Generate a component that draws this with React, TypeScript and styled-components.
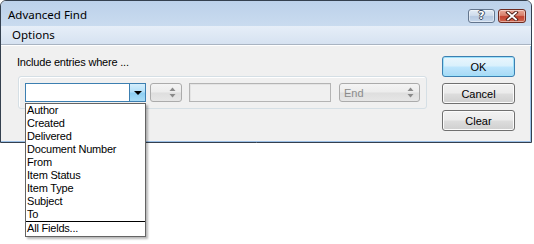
import React from "react";
import styled, { createGlobalStyle } from "styled-components";

const Global = createGlobalStyle`
  html, body { margin: 0; padding: 0; background: #ffffff; }
  body { font-family: "Liberation Sans", Arial, sans-serif; font-size: 11px; color: #000; }
  * { box-sizing: border-box; }
`;

const Page = styled.div`
  width: 534px;
  height: 244px;
  background: #ffffff;
  position: relative;
`;

const Window = styled.div`
  position: relative;
  width: 532px;
  height: 143px;
  display: flex;
  flex-direction: column;
  border: 1px solid #34404f;
  border-radius: 6px 6px 0 0;
  background: #f0f0f0;
  box-shadow: inset -1px -1px 0 #9cc0e6;
`;

const TitleBar = styled.div`
  height: 25px;
  display: flex;
  align-items: flex-start;
  padding: 0 5px 0 7px;
  border-radius: 5px 5px 0 0;
  background: linear-gradient(#bcd1ea, #c9dbef);
`;

const TitleText = styled.div`
  flex: 1;
  margin-top: 6px;
  font-family: "Noto Sans", "Open Sans", sans-serif;
  font-size: 11.5px;
  line-height: 16px;
  color: #000;
`;

const CaptionButtons = styled.div`
  display: flex;
  gap: 3px;
  margin-top: 8px;
`;

const CaptionButton = styled.div<{ $close?: boolean }>`
  width: ${(p) => (p.$close ? 28 : 27)}px;
  height: 14px;
  border-radius: 3px;
  border: 1px solid ${(p) => (p.$close ? "#6e2b21" : "#63758d")};
  background: ${(p) =>
    p.$close
      ? "linear-gradient(#e9a99a 0%, #d8806c 45%, #c2412f 55%, #d0674f 100%)"
      : "linear-gradient(#e3ecf6 0%, #cfdcec 45%, #b6c9e1 55%, #c7d8ec 100%)"};
  box-shadow: inset 0 0 0 1px rgba(255, 255, 255, 0.45);
  display: flex;
  align-items: center;
  justify-content: center;
`;

const HelpGlyph = styled.span`
  font-family: "DejaVu Sans", sans-serif;
  font-weight: bold;
  font-size: 11px;
  line-height: 12px;
  color: #ffffff;
  text-shadow: 1px 0 0 #3a4b62, -1px 0 0 #3a4b62, 0 1px 0 #3a4b62, 0 -1px 0 #3a4b62;
`;

const MenuBar = styled.div`
  height: 19px;
  display: flex;
  align-items: center;
  padding-left: 11px;
  background: linear-gradient(#e6eef8, #d6e2f1);
  border-bottom: 1px solid #a9b4c2;
  box-shadow: 0 1px 0 #ffffff;
`;

const MenuItem = styled.span`
  font-family: "Noto Sans", "Open Sans", sans-serif;
  font-size: 11.5px;
  line-height: 16px;
  color: #000;
`;

const Content = styled.div`
  flex: 1;
  display: flex;
  padding: 11px 0 0 16px;
`;

const LeftColumn = styled.div`
  display: flex;
  flex-direction: column;
`;

const Label = styled.div`
  font-size: 11px;
  line-height: 13px;
  height: 13px;
  letter-spacing: -0.2px;
`;

const GroupBox = styled.div`
  margin: 7px 0 0 1px;
  width: 409px;
  height: 33px;
  border: 1px solid #d5dfe5;
  border-radius: 3px;
  box-shadow: inset 1px 1px 0 #ffffff;
  padding: 6px;
  display: flex;
  align-items: flex-start;
`;

const ComboWrap = styled.div`
  position: relative;
  width: 121px;
  height: 19px;
`;

const ActiveCombo = styled.div`
  width: 121px;
  height: 19px;
  display: flex;
  background: #ffffff;
  border: 1px solid #3c7fb1;
`;

const ComboField = styled.div`
  flex: 1;
`;

const DropButton = styled.div`
  width: 16px;
  border-left: 1px solid #3c7fb1;
  background: linear-gradient(#d5eefc 0%, #b3e0f9 45%, #8fd0f3 55%, #a9dcf6 100%);
  display: flex;
  align-items: center;
  justify-content: center;
`;

const DownArrow = styled.div`
  width: 0;
  height: 0;
  border-left: 4px solid transparent;
  border-right: 4px solid transparent;
  border-top: 4px solid #000;
  margin-top: 1px;
`;

const DisabledCombo = styled.div<{ $w: number; $ml: number }>`
  width: ${(p) => p.$w}px;
  height: 19px;
  margin-left: ${(p) => p.$ml}px;
  border: 1px solid #ababab;
  border-radius: 3px;
  background: linear-gradient(#f4f4f4 0%, #ececec 48%, #dedede 52%, #e6e6e6 100%);
  display: flex;
  align-items: center;
  padding: 0 5px 0 4px;
  color: #8b8b8b;
  font-size: 11px;
`;

const ComboLabel = styled.span`
  flex: 1;
`;

const DisabledText = styled.div`
  width: 142px;
  height: 19px;
  margin-left: 7px;
  border: 1px solid #b4b4b4;
  box-shadow: inset 1px 1px 0 #e4e4e4;
  background: #f0f0f0;
`;

const SpinArrows = () => (
  <svg width="7" height="11" viewBox="0 0 7 11">
    <path d="M3.5 0.5 L6.5 4 L0.5 4 Z" fill="#8a8a8a" />
    <path d="M3.5 10.5 L6.5 7 L0.5 7 Z" fill="#8a8a8a" />
  </svg>
);

const ListBox = styled.ul`
  position: absolute;
  left: 0;
  top: 20px;
  width: 121px;
  margin: 0;
  padding: 0 0 1px;
  list-style: none;
  background: #ffffff;
  border: 1px solid #646464;
  box-shadow: 2px 2px 2px rgba(0, 0, 0, 0.28);
  z-index: 5;
`;

const ListItem = styled.li<{ $sep?: boolean }>`
  height: ${(p) => (p.$sep ? 14 : 13)}px;
  line-height: 13px;
  padding-left: 1px;
  font-size: 11px;
  letter-spacing: -0.2px;
  color: #000;
  white-space: nowrap;
  border-top: ${(p) => (p.$sep ? "1px solid #000" : "none")};
`;

const ButtonColumn = styled.div`
  display: flex;
  flex-direction: column;
  gap: 6px;
  margin-left: 15px;
`;

const DialogButton = styled.div<{ $default?: boolean }>`
  width: 73px;
  height: 21px;
  border-radius: 3px;
  border: 1px solid ${(p) => (p.$default ? "#3c7fb1" : "#707070")};
  background: ${(p) =>
    p.$default
      ? "linear-gradient(#eaf6fd 0%, #d9f0fc 48%, #bee6fd 52%, #a7d9f5 100%)"
      : "linear-gradient(#f2f2f2 0%, #ebebeb 48%, #dddddd 52%, #cfcfcf 100%)"};
  box-shadow: inset 0 0 0 1px ${(p) => (p.$default ? "#9ee1fa" : "#fbfbfb")};
  display: flex;
  align-items: center;
  justify-content: center;
  font-size: 11px;
  color: #000;
`;

const fields = [
  "Author",
  "Created",
  "Delivered",
  "Document Number",
  "From",
  "Item Status",
  "Item Type",
  "Subject",
  "To",
];

export default function App() {
  return (
    <Page>
      <Global />
      <Window>
        <TitleBar>
          <TitleText>Advanced Find</TitleText>
          <CaptionButtons>
            <CaptionButton>
              <HelpGlyph>?</HelpGlyph>
            </CaptionButton>
            <CaptionButton $close>
              <svg width="14" height="10" viewBox="0 0 14 10">
                <path d="M3 1.5 L11 8.5 M11 1.5 L3 8.5" stroke="#4a1a12" strokeWidth="3.6" strokeLinecap="square" />
                <path d="M3 1.5 L11 8.5 M11 1.5 L3 8.5" stroke="#ffffff" strokeWidth="1.8" strokeLinecap="square" />
              </svg>
            </CaptionButton>
          </CaptionButtons>
        </TitleBar>
        <MenuBar>
          <MenuItem>Options</MenuItem>
        </MenuBar>
        <Content>
          <LeftColumn>
            <Label>Include entries where ...</Label>
            <GroupBox>
              <ComboWrap>
                <ActiveCombo>
                  <ComboField />
                  <DropButton>
                    <DownArrow />
                  </DropButton>
                </ActiveCombo>
                <ListBox>
                  {fields.map((f) => (
                    <ListItem key={f}>{f}</ListItem>
                  ))}
                  <ListItem $sep>All Fields...</ListItem>
                </ListBox>
              </ComboWrap>
              <DisabledCombo $w={32} $ml={4}>
                <ComboLabel />
                <SpinArrows />
              </DisabledCombo>
              <DisabledText />
              <DisabledCombo $w={81} $ml={8}>
                <ComboLabel>End</ComboLabel>
                <SpinArrows />
              </DisabledCombo>
            </GroupBox>
          </LeftColumn>
          <ButtonColumn>
            <DialogButton $default>OK</DialogButton>
            <DialogButton>Cancel</DialogButton>
            <DialogButton>Clear</DialogButton>
          </ButtonColumn>
        </Content>
      </Window>
    </Page>
  );
}
